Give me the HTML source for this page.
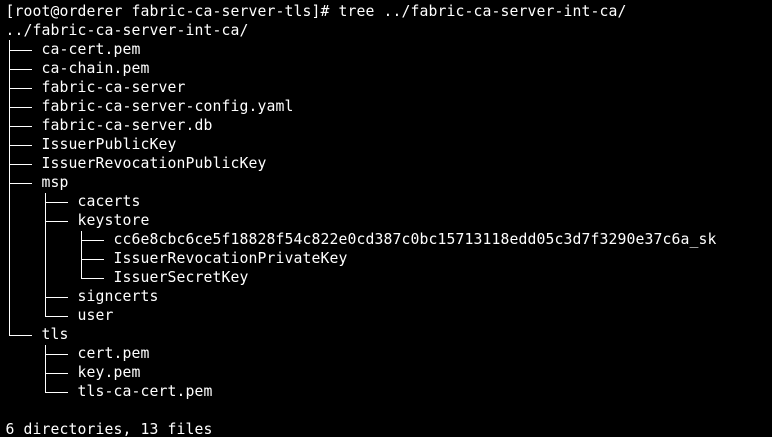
<!DOCTYPE html>
<html><head><style>
html,body{margin:0;padding:0;background:#000;width:772px;height:437px;overflow:hidden;position:relative}
pre{margin:0;padding:2px 0 0 5.5px;color:#fff;font-family:"DejaVu Sans Mono","Liberation Mono",monospace;font-size:14.75px;line-height:19px;letter-spacing:0.12px}
.v,.h{position:absolute;background:#fff}
.v{width:1px}.h{height:1px}
.l1{left:9px;width:23px}.l2{left:45px;width:23px}.l3{left:81px;width:23px}
</style></head><body><pre>[root@orderer fabric-ca-server-tls]# tree ../fabric-ca-server-int-ca/
../fabric-ca-server-int-ca/
    ca-cert.pem
    ca-chain.pem
    fabric-ca-server
    fabric-ca-server-config.yaml
    fabric-ca-server.db
    IssuerPublicKey
    IssuerRevocationPublicKey
    msp
        cacerts
        keystore
            cc6e8cbc6ce5f18828f54c822e0cd387c0bc15713118edd05c3d7f3290e37c6a_sk
            IssuerRevocationPrivateKey
            IssuerSecretKey
        signcerts
        user
    tls
        cert.pem
        key.pem
        tls-ca-cert.pem

6 directories, 13 files</pre>
<div class="v" style="left:9px;top:40px;height:296px"></div>
<div class="v" style="left:45px;top:193px;height:124px"></div>
<div class="v" style="left:45px;top:345px;height:48px"></div>
<div class="v" style="left:81px;top:231px;height:48px"></div>
<div class="h l1" style="top:50px"></div>
<div class="h l1" style="top:69px"></div>
<div class="h l1" style="top:88px"></div>
<div class="h l1" style="top:107px"></div>
<div class="h l1" style="top:126px"></div>
<div class="h l1" style="top:145px"></div>
<div class="h l1" style="top:164px"></div>
<div class="h l1" style="top:183px"></div>
<div class="h l1" style="top:335px"></div>
<div class="h l2" style="top:202px"></div>
<div class="h l2" style="top:221px"></div>
<div class="h l2" style="top:297px"></div>
<div class="h l2" style="top:316px"></div>
<div class="h l2" style="top:354px"></div>
<div class="h l2" style="top:373px"></div>
<div class="h l2" style="top:392px"></div>
<div class="h l3" style="top:240px"></div>
<div class="h l3" style="top:259px"></div>
<div class="h l3" style="top:278px"></div>
</body></html>
